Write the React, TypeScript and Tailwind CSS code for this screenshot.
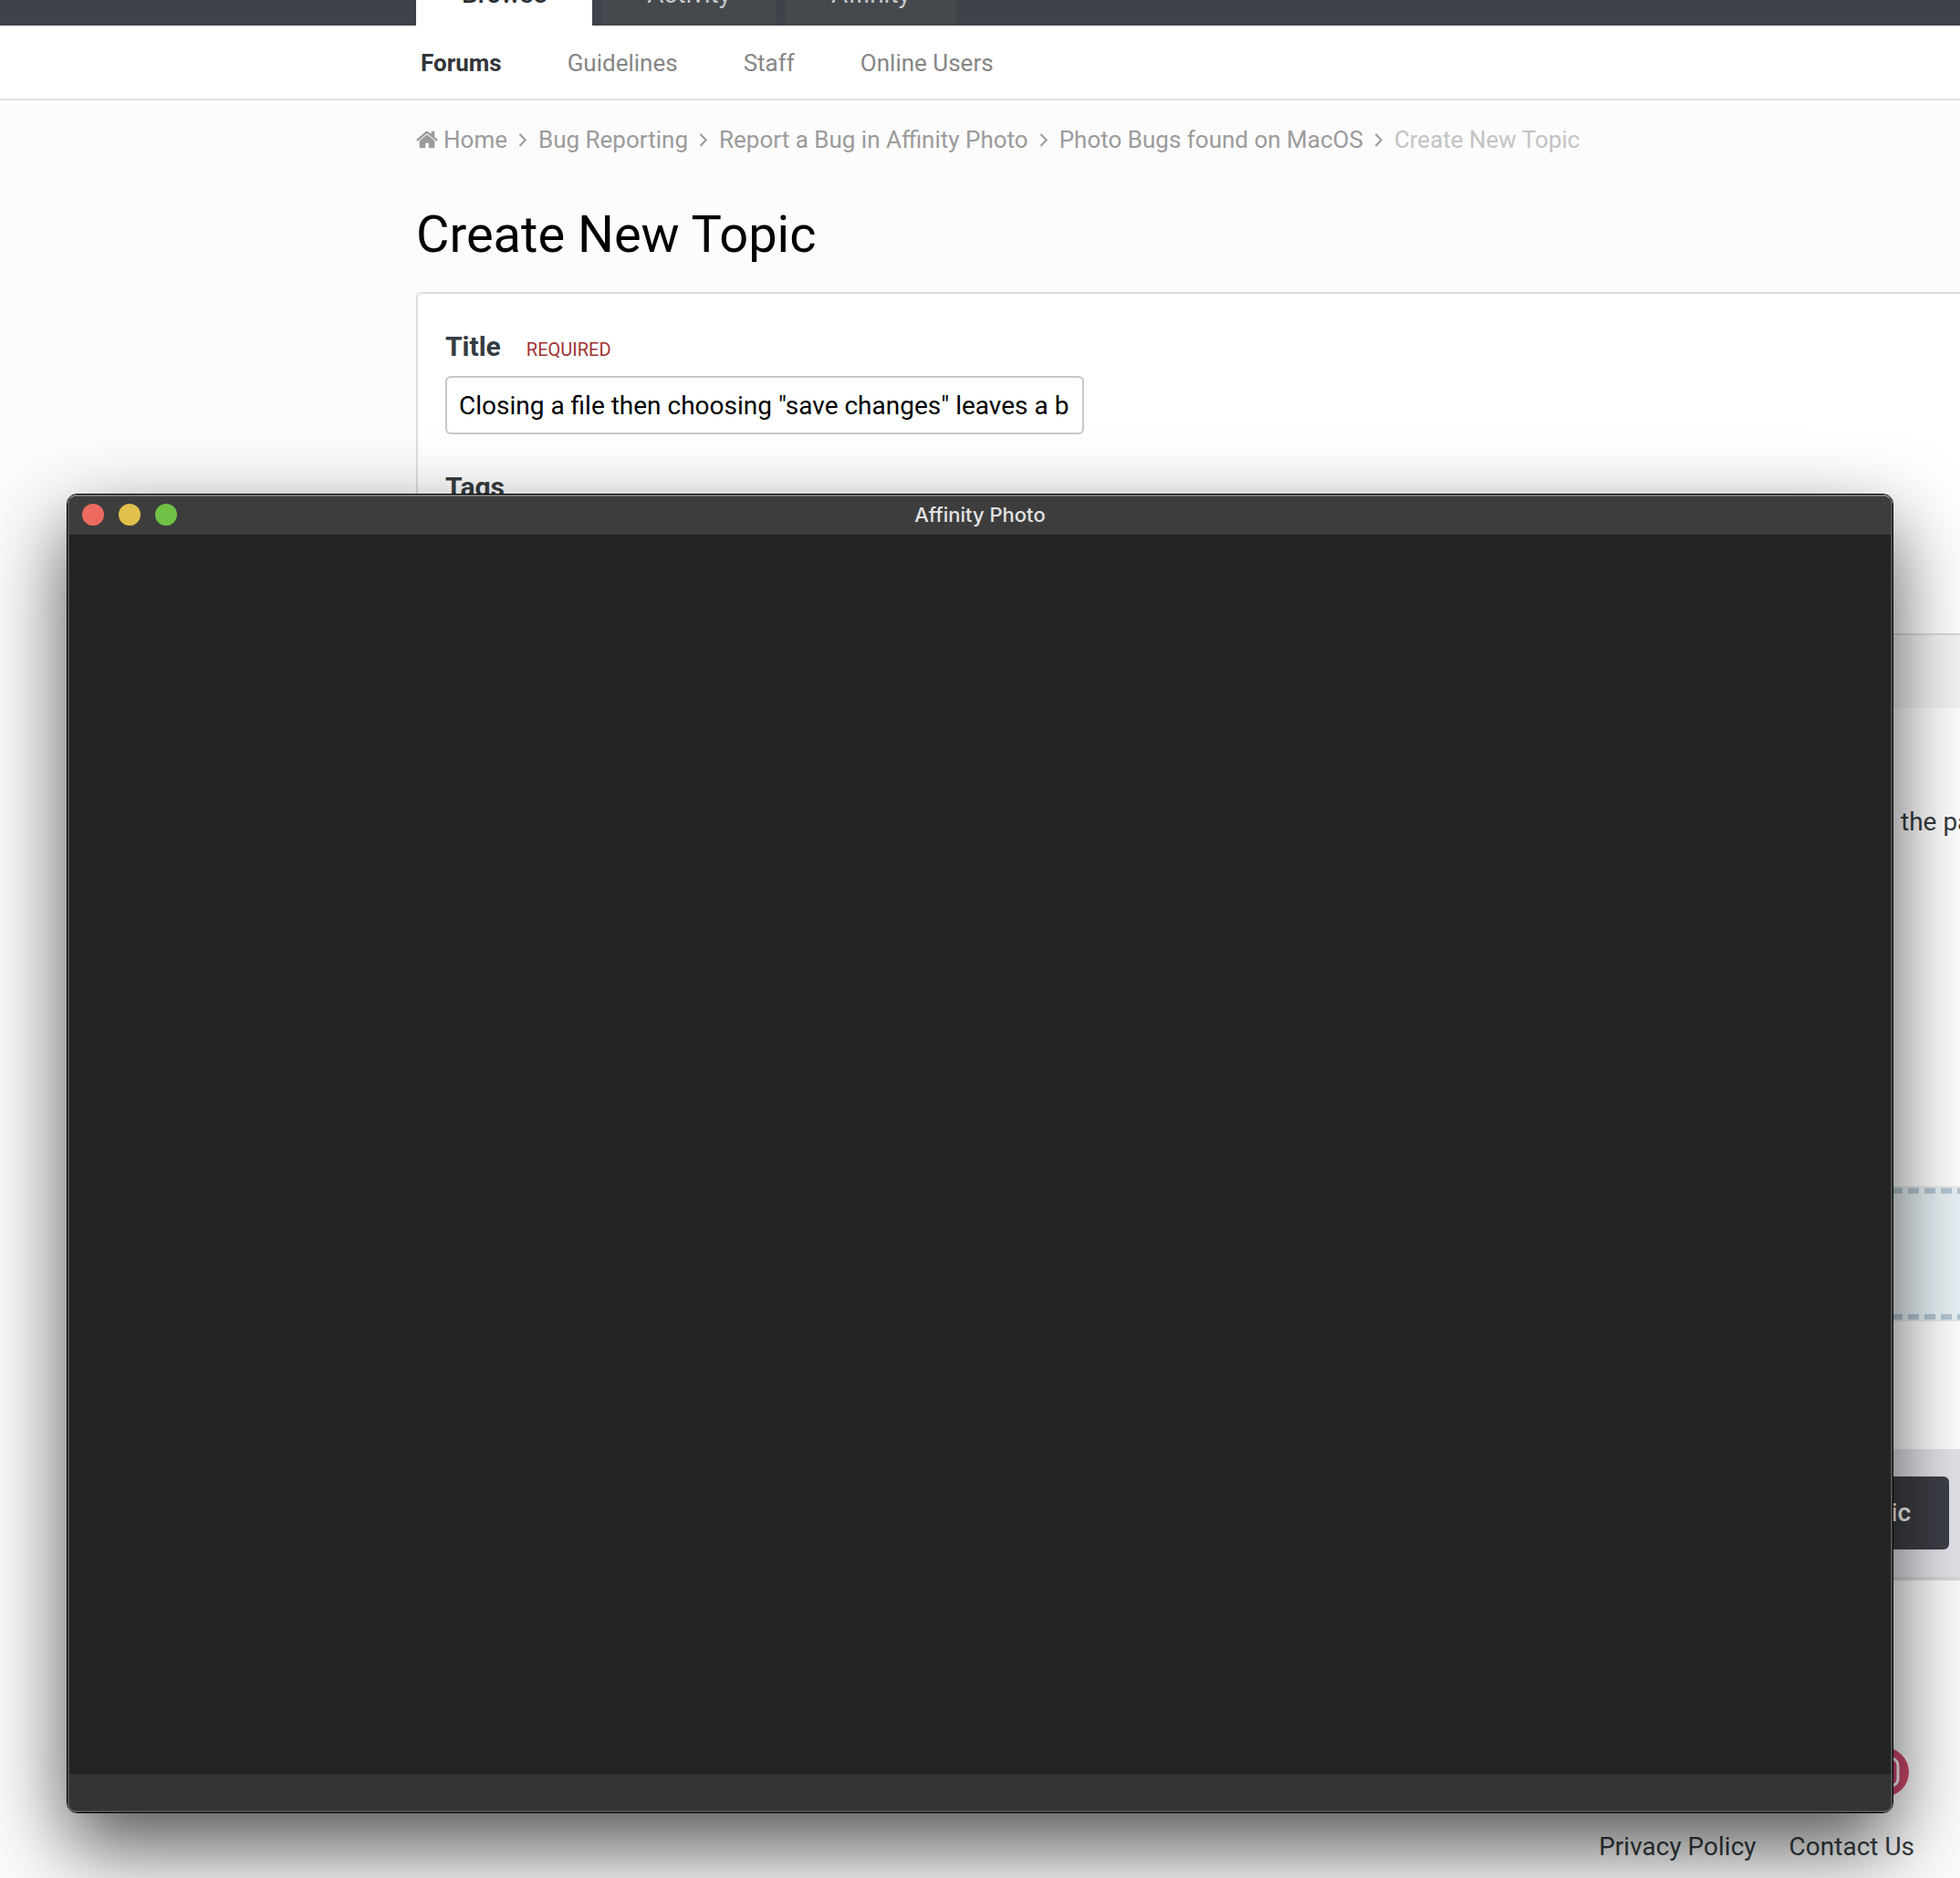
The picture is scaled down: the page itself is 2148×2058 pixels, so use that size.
import React from "react";
import { Instagram } from "lucide-react";

const subLinks = ["Guidelines", "Staff", "Online Users"];

const crumbs = [
  "Bug Reporting",
  "Report a Bug in Affinity Photo",
  "Photo Bugs found on MacOS",
];

function HomeIcon() {
  return (
    <svg className="mr-1.5 h-[26px] w-6" viewBox="64 0 1664 1792" fill="currentColor" aria-hidden="true">
      <path d="M1472 992v480q0 26-19 45t-45 19h-384v-384h-256v384h-384q-26 0-45-19t-19-45v-480q0-1 .5-3t.5-3l575-474 575 474q1 2 1 6zm223-69l-62 74q-8 9-21 11h-3q-13 0-21-7l-692-577-692 577q-12 8-24 7-13-2-21-11l-62-74q-8-10-7-23.5t11-21.5l719-599q32-26 76-26t76 26l244 204v-195q0-14 9-23t23-9h192q14 0 23 9t9 23v408l219 182q10 8 11 21.5t-7 23.5z" />
    </svg>
  );
}

function Angle() {
  return (
    <svg className="h-4 w-[10px]" viewBox="0 0 10 16" fill="none" stroke="currentColor" strokeWidth="2" aria-hidden="true">
      <path d="M1.5 2 L7.8 8.5 L1.5 15" />
    </svg>
  );
}

function Header() {
  return (
    <header>
      <nav className="flex h-7 items-end gap-[10px] overflow-hidden bg-[#3d424b] pl-[456px] text-[28px] leading-8">
        <a href="#" className="bg-white px-[50px] pb-[18px] font-medium text-[#2b2e33]">
          Browse
        </a>
        <a href="#" className="bg-[#45494d] px-[50px] pb-[18px] text-[#c6c8ca]">
          Activity
        </a>
        <a href="#" className="bg-[#45494d] px-[50px] pb-[18px] text-[#c6c8ca]">
          Affinity
        </a>
      </nav>
      <nav className="flex h-[82px] items-center gap-[72px] border-b-2 border-[#dfdfdf] bg-white pt-0.5 pl-[461px] text-[26px] leading-8 text-[#868686]">
        <a href="#" className="font-bold text-[#333538]">
          Forums
        </a>
        {subLinks.map((link) => (
          <a key={link} href="#">
            {link}
          </a>
        ))}
      </nav>
    </header>
  );
}

function Breadcrumb() {
  return (
    <nav className="flex items-center gap-3 text-[26px] leading-8 whitespace-nowrap text-[#9b9b9b]">
      <a href="#" className="flex items-center">
        <HomeIcon />
        Home
      </a>
      {crumbs.map((crumb) => (
        <React.Fragment key={crumb}>
          <Angle />
          <a href="#">{crumb}</a>
        </React.Fragment>
      ))}
      <Angle />
      <span className="text-[#c3c3c3]">Create New Topic</span>
    </nav>
  );
}

function TopicForm() {
  return (
    <form className="rounded-tl-md border-t-2 border-l-2 border-[#dfdfdf] bg-white">
      <div className="px-[30px] pt-[38px] pb-[140px]">
        <div className="flex h-10 items-baseline gap-7 leading-10">
          <label htmlFor="topic-title" className="text-[30px] font-bold text-[#353c41]">
            Title
          </label>
          <span className="text-[20px] text-[#9f3333]">REQUIRED</span>
        </div>
        <input
          id="topic-title"
          type="text"
          defaultValue={'Closing a file then choosing "save changes" leaves a b'}
          className="mt-3 block h-16 w-[700px] rounded-md border-2 border-[#c8c8c8] bg-white px-[13px] text-[28px] text-black"
        />
        <h2 className="mt-[38px] text-[30px] leading-10 font-bold text-[#353c41]">Tags</h2>
      </div>

      {/* editor */}
      <div className="h-[82px] border-t-2 border-[#dcdcdc] bg-[#f5f5f5]" />
      <div className="flex h-[524px] justify-end overflow-hidden pt-[105px]">
        <p className="w-[65px] text-[28px] leading-10 whitespace-nowrap text-[#353c41]">the pa</p>
      </div>

      {/* attachments drop area */}
      <div className="-mr-[9px] ml-[31px] border-y-2 border-[#e4eaee] bg-[#e9f2f6]">
        <div className="h-36 border-y-[6px] border-dashed border-[#b4c7d5]" />
      </div>

      <div className="mt-[140px] flex h-36 items-start justify-end border-b-4 border-[#d8d9dd] bg-[#e4e5ea] pt-[30px] pr-3">
        <button type="button" className="h-20 rounded-md bg-[#3d3f46] px-[42px] text-[28px] font-medium text-white">
          Submit Topic
        </button>
      </div>
    </form>
  );
}

function Footer() {
  return (
    <footer className="pt-[183px] pb-[14px]">
      <div className="flex justify-end pr-14">
        <a href="#" aria-label="Instagram" className="flex size-[54px] items-center justify-center rounded-full bg-[#d0486a] text-white">
          <Instagram className="size-9" />
        </a>
      </div>
      <div className="mt-[35px] flex justify-end gap-9 pr-[50px] text-[28px] leading-10 text-[#353c41]">
        <a href="#">Privacy Policy</a>
        <a href="#">Contact Us</a>
      </div>
    </footer>
  );
}

function AppWindow() {
  return (
    <section className="absolute inset-x-[73px] top-[541px] bottom-[71px] rounded-[11px] border border-black shadow-[0_36px_88px_rgba(0,0,0,0.68)]">
      <div className="flex h-full flex-col overflow-hidden rounded-[10px] border-2 border-[#505050] border-t-[#757575] bg-[#232323]">
        <div className="grid h-[42px] shrink-0 grid-cols-[1fr_auto_1fr] items-center bg-[#3d3d3d] px-[14px] pb-0.5">
          <div className="flex gap-4">
            <button type="button" aria-label="Close" className="size-6 rounded-full bg-[#ed6a5f]" />
            <button type="button" aria-label="Minimize" className="size-6 rounded-full bg-[#e1c04c]" />
            <button type="button" aria-label="Zoom" className="size-6 rounded-full bg-[#71c146]" />
          </div>
          <h2 className="font-[Inter,sans-serif] text-[22px] leading-7 font-medium text-[#e3e3e3]">Affinity Photo</h2>
        </div>
        <div className="grow" />
        <div className="h-10 shrink-0 bg-[#333333]" />
      </div>
    </section>
  );
}

function App() {
  return (
    <div className="relative overflow-hidden bg-[#fcfcfc] font-[Roboto,sans-serif]">
      <Header />
      <main className="pt-[27px] pl-[456px]">
        <Breadcrumb />
        <h1 className="mt-14 mb-[31px] text-[56px] leading-[64px] text-black">Create New Topic</h1>
        <TopicForm />
      </main>
      <Footer />
      <AppWindow />
    </div>
  );
}

export default App;
